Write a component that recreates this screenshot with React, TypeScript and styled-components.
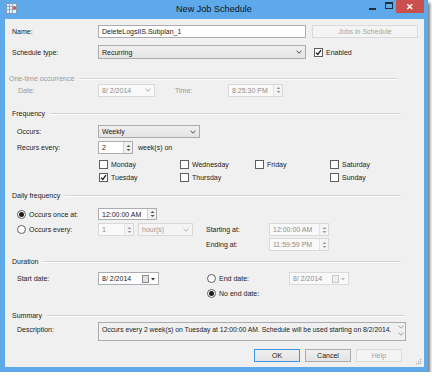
import styled, { createGlobalStyle } from 'styled-components';

const GlobalStyle = createGlobalStyle`
  html, body {
    margin: 0;
    padding: 0;
    background: #ffffff;
  }
  body {
    font-family: 'Liberation Sans', Arial, sans-serif;
    font-size: 7px;
    color: #1b1b1b;
  }
`;

const Chevron = ({ color = '#4a4a4a' }: { color?: string }) => (
  <svg width="6" height="4" viewBox="0 0 6 4">
    <path d="M0.5 0.8 L3 3.2 L5.5 0.8" fill="none" stroke={color} strokeWidth="1" />
  </svg>
);

const SpinArrows = ({ color = '#555' }: { color?: string }) => (
  <svg width="5" height="8" viewBox="0 0 5 8">
    <path d="M0.5 3 L2.5 1 L4.5 3 Z" fill={color} />
    <path d="M0.5 5 L2.5 7 L4.5 5 Z" fill={color} />
  </svg>
);

const TickMark = () => (
  <svg width="7" height="7" viewBox="0 0 7 7">
    <path d="M1 3.6 L2.8 5.4 L6 1.2" fill="none" stroke="#1b1b1b" strokeWidth="1.3" />
  </svg>
);

const AppIcon = () => (
  <svg width="11" height="11" viewBox="0 0 11 11">
    <rect x="0.5" y="0.5" width="10" height="10" fill="#e8f1fb" stroke="#7d9cc0" />
    <path d="M0.5 3.5 H10.5 M0.5 6.5 H10.5 M3.5 0.5 V10.5 M6.5 0.5 V10.5" stroke="#7d9cc0" strokeWidth="0.8" />
    <rect x="6.8" y="3.8" width="3.4" height="2.4" fill="#e4572e" />
  </svg>
);

const CalendarIcon = ({ disabled }: { disabled?: boolean }) => (
  <svg width="14" height="8" viewBox="0 0 14 8">
    <rect x="0.5" y="0.5" width="6" height="7" fill={disabled ? '#f0f0f0' : '#e2e2e2'} stroke={disabled ? '#c8c8c8' : '#8a8a8a'} />
    <path d="M9 3 L11 5.5 L13 3 Z" fill={disabled ? '#b8b8b8' : '#333'} />
  </svg>
);

const Window = styled.div`
  width: 428px;
  height: 372px;
  box-sizing: border-box;
  background: #5ea9ea;
  padding: 0 4px 5px 5px;
  display: flex;
  flex-direction: column;
  box-shadow: 2px 3px 3px rgba(0, 0, 0, 0.55);
`;

const TitleBar = styled.div`
  height: 19px;
  margin: 0 -4px 0 -5px;
  display: grid;
  grid-template-columns: 1fr auto 1fr;
  align-items: start;
`;

const TitleIcon = styled.div`
  padding: 3px 0 0 6px;
  display: flex;
`;

const TitleText = styled.div`
  font-size: 9px;
  line-height: 19px;
  color: #111;
  letter-spacing: 0.05px;
`;

const WindowButtons = styled.div`
  display: flex;
  justify-content: flex-end;
  padding-right: 4px;
`;

const WinButton = styled.div<{ $w: number; $close?: boolean }>`
  width: ${({ $w }) => $w}px;
  height: 13px;
  display: flex;
  align-items: center;
  justify-content: center;
  background: ${({ $close }) => ($close ? '#c9504c' : 'transparent')};
  color: #fff;
  font-size: 9px;
  font-weight: bold;
`;

const MinGlyph = styled.div`
  width: 7px;
  height: 2px;
  background: #1e2e3e;
  margin-top: 5px;
`;

const MaxGlyph = styled.div`
  width: 6px;
  height: 4px;
  border: 1px solid #1e2e3e;
  border-top-width: 2px;
  margin-top: -3px;
`;

const Body = styled.div`
  flex: 1;
  background: #f0f0f0;
  display: flex;
  flex-direction: column;
  position: relative;
`;

const Row = styled.div<{ $top: number; $h: number; $indent?: number; $align?: string }>`
  display: flex;
  align-items: ${({ $align }) => $align || 'center'};
  margin-top: ${({ $top }) => $top}px;
  height: ${({ $h }) => $h}px;
  padding-left: ${({ $indent }) => $indent ?? 7}px;
`;

const Label = styled.div<{ $w?: number; $ml?: number; $disabled?: boolean }>`
  width: ${({ $w }) => ($w ? `${$w}px` : 'auto')};
  margin-left: ${({ $ml }) => $ml ?? 0}px;
  flex-shrink: 0;
  white-space: nowrap;
  color: ${({ $disabled }) => ($disabled ? '#9a9a9a' : '#1b1b1b')};
`;

const GroupHeader = styled.div<{ $top: number; $indent?: number; $right?: number; $disabled?: boolean }>`
  display: flex;
  align-items: center;
  gap: 5px;
  height: 9px;
  margin-top: ${({ $top }) => $top}px;
  padding-left: ${({ $indent }) => $indent ?? 7}px;
  padding-right: ${({ $right }) => $right ?? 23}px;
  color: ${({ $disabled }) => ($disabled ? '#9a9a9a' : '#1b1b1b')};
  white-space: nowrap;

  &::after {
    content: '';
    flex: 1;
    height: 1px;
    background: #d3d3d3;
    box-shadow: 0 1px 0 #ffffff;
  }
`;

const Box = styled.div<{ $w: number; $h?: number; $disabled?: boolean; $ml?: number }>`
  width: ${({ $w }) => $w}px;
  height: ${({ $h }) => $h ?? 13}px;
  margin-left: ${({ $ml }) => $ml ?? 0}px;
  box-sizing: border-box;
  flex-shrink: 0;
  background: ${({ $disabled }) => ($disabled ? '#f9f9f9' : '#ffffff')};
  border: 1px solid ${({ $disabled }) => ($disabled ? '#d9d9d9' : '#acadb2')};
  color: ${({ $disabled }) => ($disabled ? '#8d8d8d' : '#1b1b1b')};
  display: flex;
  align-items: center;
  padding-left: 3px;
  white-space: pre;
`;

const BoxText = styled.div`
  flex: 1;
  line-height: 9px;
`;

const Spinner = styled.div<{ $disabled?: boolean }>`
  width: 9px;
  height: 100%;
  box-sizing: border-box;
  border-left: 1px solid ${({ $disabled }) => ($disabled ? '#e2e2e2' : '#d0d0d0')};
  background: ${({ $disabled }) => ($disabled ? '#f4f4f4' : '#f0f0f0')};
  display: flex;
  align-items: center;
  justify-content: center;
`;

const Combo = styled.div<{ $w: number; $h?: number; $disabled?: boolean; $ml?: number }>`
  width: ${({ $w }) => $w}px;
  height: ${({ $h }) => $h ?? 13}px;
  margin-left: ${({ $ml }) => $ml ?? 0}px;
  box-sizing: border-box;
  flex-shrink: 0;
  background: ${({ $disabled }) =>
    $disabled ? '#f4f4f4' : 'linear-gradient(#f0f0f0, #e4e4e4)'};
  border: 1px solid ${({ $disabled }) => ($disabled ? '#d9d9d9' : '#acacac')};
  color: ${({ $disabled }) => ($disabled ? '#9a9a9a' : '#1b1b1b')};
  display: flex;
  align-items: center;
  padding: 0 3px 0 3px;
  white-space: nowrap;
`;

const CheckItem = styled.div<{ $w?: number; $ml?: number }>`
  display: flex;
  align-items: center;
  gap: 3px;
  width: ${({ $w }) => ($w ? `${$w}px` : 'auto')};
  margin-left: ${({ $ml }) => $ml ?? 0}px;
  flex-shrink: 0;
  white-space: nowrap;
  color: #1b1b1b;
`;

const CheckBox = styled.div`
  width: 9px;
  height: 9px;
  box-sizing: border-box;
  border: 1px solid #5e5e5e;
  background: #ffffff;
  display: flex;
  align-items: center;
  justify-content: center;
  flex-shrink: 0;
`;

const Radio = styled.div<{ $on?: boolean }>`
  width: 9px;
  height: 9px;
  box-sizing: border-box;
  border: 1px solid #5e5e5e;
  border-radius: 50%;
  background: #ffffff;
  display: flex;
  align-items: center;
  justify-content: center;
  flex-shrink: 0;

  &::after {
    content: '';
    width: 5px;
    height: 5px;
    border-radius: 50%;
    background: ${({ $on }) => ($on ? '#1b1b1b' : 'transparent')};
  }
`;

const Button = styled.div<{ $w: number; $default?: boolean; $disabled?: boolean; $ml?: number }>`
  width: ${({ $w }) => $w}px;
  height: 13px;
  margin-left: ${({ $ml }) => $ml ?? 0}px;
  box-sizing: border-box;
  flex-shrink: 0;
  display: flex;
  align-items: center;
  justify-content: center;
  background: ${({ $disabled }) => ($disabled ? '#f4f4f4' : 'linear-gradient(#efefef, #e4e4e4)')};
  border: 1px solid
    ${({ $default, $disabled }) => ($default ? '#3c96e6' : $disabled ? '#dadada' : '#acacac')};
  color: ${({ $disabled }) => ($disabled ? '#a3a3a3' : '#1b1b1b')};
`;

const TextArea = styled.div`
  width: 308px;
  height: 19px;
  box-sizing: border-box;
  border: 1px solid #acadb2;
  background: #f0f0f0;
  display: flex;
  padding: 3px 0 0 3px;
  white-space: nowrap;
  font-size: 6.8px;
`;

const ScrollArrows = styled.div`
  margin-left: auto;
  width: 8px;
  display: flex;
  flex-direction: column;
  align-items: center;
  gap: 3px;
  margin-top: -1px;
`;

const Grip = styled.svg`
  position: absolute;
  right: 2px;
  bottom: 2px;
`;

const days = [
  [
    { name: 'Monday', checked: false, w: 81 },
    { name: 'Wednesday', checked: false, w: 75 },
    { name: 'Friday', checked: false, w: 75 },
    { name: 'Saturday', checked: false, w: 60 },
  ],
  [
    { name: 'Tuesday', checked: true, w: 81 },
    { name: 'Thursday', checked: false, w: 75 },
    { name: '', checked: false, w: 75 },
    { name: 'Sunday', checked: false, w: 60 },
  ],
];

const App = () => {
  return (
    <>
      <GlobalStyle />
      <Window>
        <TitleBar>
          <TitleIcon>
            <AppIcon />
          </TitleIcon>
          <TitleText>{'New Job Schedule'}</TitleText>
          <WindowButtons>
            <WinButton $w={18}>
              <MinGlyph />
            </WinButton>
            <WinButton $w={15}>
              <MaxGlyph />
            </WinButton>
            <WinButton $w={28} $close>
              {'✕'}
            </WinButton>
          </WindowButtons>
        </TitleBar>

        <Body>
          <Row $top={6} $h={13}>
            <Label $w={86}>{'Name:'}</Label>
            <Box $w={208}>
              <BoxText>{'DeleteLogsIIS.Subplan_1'}</BoxText>
            </Box>
            <Button $w={106} $ml={6} $disabled>
              {'Jobs in Schedule'}
            </Button>
          </Row>

          <Row $top={7} $h={14}>
            <Label $w={86}>{'Schedule type:'}</Label>
            <Combo $w={208} $h={14}>
              <BoxText>{'Recurring'}</BoxText>
              <Chevron />
            </Combo>
            <CheckItem $ml={8}>
              <CheckBox>
                <TickMark />
              </CheckBox>
              <span>{'Enabled'}</span>
            </CheckItem>
          </Row>

          <GroupHeader $top={15} $indent={4} $right={26} $disabled>
            {'One-time occurrence'}
          </GroupHeader>
          <Row $top={0} $h={14} $indent={13}>
            <Label $w={80} $disabled>
              {'Date:'}
            </Label>
            <Box $w={57} $disabled>
              <BoxText>{'8/ 2/2014'}</BoxText>
              <Chevron color="#a8a8a8" />
              <span style={{ width: 3 }} />
            </Box>
            <Label $w={53} $ml={20} $disabled>
              {'Time:'}
            </Label>
            <Box $w={55} $disabled>
              <BoxText>{'8:25:30 PM'}</BoxText>
              <Spinner $disabled>
                <SpinArrows color="#9a9a9a" />
              </Spinner>
            </Box>
          </Row>

          <GroupHeader $top={12}>{'Frequency'}</GroupHeader>
          <Row $top={7} $h={13} $indent={12}>
            <Label $w={81}>{'Occurs:'}</Label>
            <Combo $w={102}>
              <BoxText>{'Weekly'}</BoxText>
              <Chevron />
            </Combo>
          </Row>
          <Row $top={3} $h={13} $indent={12}>
            <Label $w={81}>{'Recurs every:'}</Label>
            <Box $w={35}>
              <BoxText>{'2'}</BoxText>
              <Spinner>
                <SpinArrows />
              </Spinner>
            </Box>
            <Label $ml={5}>{'week(s) on'}</Label>
          </Row>
          {days.map((row, rowIndex) => (
            <Row key={`days-${rowIndex}`} $top={rowIndex === 0 ? 5 : 3} $h={10} $indent={94}>
              {row.map((day, index) => (
                <CheckItem key={`day-${rowIndex}-${index}`} $w={day.w}>
                  {day.name && (
                    <>
                      <CheckBox>{day.checked && <TickMark />}</CheckBox>
                      <span>{day.name}</span>
                    </>
                  )}
                </CheckItem>
              ))}
            </Row>
          ))}

          <GroupHeader $top={9}>{'Daily frequency'}</GroupHeader>
          <Row $top={8} $h={12} $indent={12}>
            <CheckItem $w={81}>
              <Radio $on />
              <span>{'Occurs once at:'}</span>
            </CheckItem>
            <Box $w={59} $h={12}>
              <BoxText>{'12:00:00 AM'}</BoxText>
              <Spinner>
                <SpinArrows />
              </Spinner>
            </Box>
          </Row>
          <Row $top={3} $h={13} $indent={12}>
            <CheckItem $w={81}>
              <Radio />
              <span>{'Occurs every:'}</span>
            </CheckItem>
            <Box $w={36} $disabled>
              <BoxText>{'1'}</BoxText>
              <Spinner $disabled>
                <SpinArrows color="#9a9a9a" />
              </Spinner>
            </Box>
            <Combo $w={55} $ml={4} $disabled>
              <BoxText>{'hour(s)'}</BoxText>
              <Chevron color="#b0b0b0" />
            </Combo>
            <Label $w={63} $ml={13}>
              {'Starting at:'}
            </Label>
            <Box $w={60} $disabled>
              <BoxText>{'12:00:00 AM'}</BoxText>
              <Spinner $disabled>
                <SpinArrows color="#9a9a9a" />
              </Spinner>
            </Box>
          </Row>
          <Row $top={2} $h={13} $indent={201}>
            <Label $w={63}>{'Ending at:'}</Label>
            <Box $w={60} $disabled>
              <BoxText>{'11:59:59 PM'}</BoxText>
              <Spinner $disabled>
                <SpinArrows color="#9a9a9a" />
              </Spinner>
            </Box>
          </Row>

          <GroupHeader $top={6}>{'Duration'}</GroupHeader>
          <Row $top={6} $h={13} $indent={12}>
            <Label $w={81}>{'Start date:'}</Label>
            <Box $w={61}>
              <BoxText>{'8/ 2/2014'}</BoxText>
              <CalendarIcon />
              <span style={{ width: 2 }} />
            </Box>
            <CheckItem $w={82} $ml={48}>
              <Radio />
              <span>{'End date:'}</span>
            </CheckItem>
            <Box $w={60} $disabled>
              <BoxText>{'8/ 2/2014'}</BoxText>
              <CalendarIcon disabled />
              <span style={{ width: 2 }} />
            </Box>
          </Row>
          <Row $top={3} $h={10} $indent={202}>
            <CheckItem>
              <Radio $on />
              <span>{'No end date:'}</span>
            </CheckItem>
          </Row>

          <GroupHeader $top={13} $right={20}>
            {'Summary'}
          </GroupHeader>
          <Row $top={2} $h={19} $indent={12} $align="flex-start">
            <Label $w={81} style={{ paddingTop: 4 }}>
              {'Description:'}
            </Label>
            <TextArea>
              <span>
                {
                  'Occurs every 2 week(s) on Tuesday at 12:00:00 AM. Schedule will be used starting on 8/2/2014.'
                }
              </span>
              <ScrollArrows>
                <Chevron color="#9a9a9a" />
                <Chevron color="#9a9a9a" />
              </ScrollArrows>
            </TextArea>
          </Row>

          <Row $top={8} $h={13} $indent={249}>
            <Button $w={46} $default>
              {'OK'}
            </Button>
            <Button $w={46} $ml={5}>
              {'Cancel'}
            </Button>
            <Button $w={46} $ml={5} $disabled>
              {'Help'}
            </Button>
          </Row>

          <Grip width="6" height="6" viewBox="0 0 6 6">
            <rect x="4" y="0" width="1.2" height="1.2" fill="#a8a8a8" />
            <rect x="2" y="2" width="1.2" height="1.2" fill="#a8a8a8" />
            <rect x="4" y="2" width="1.2" height="1.2" fill="#a8a8a8" />
            <rect x="0" y="4" width="1.2" height="1.2" fill="#a8a8a8" />
            <rect x="2" y="4" width="1.2" height="1.2" fill="#a8a8a8" />
            <rect x="4" y="4" width="1.2" height="1.2" fill="#a8a8a8" />
          </Grip>
        </Body>
      </Window>
    </>
  );
};

export default App;
